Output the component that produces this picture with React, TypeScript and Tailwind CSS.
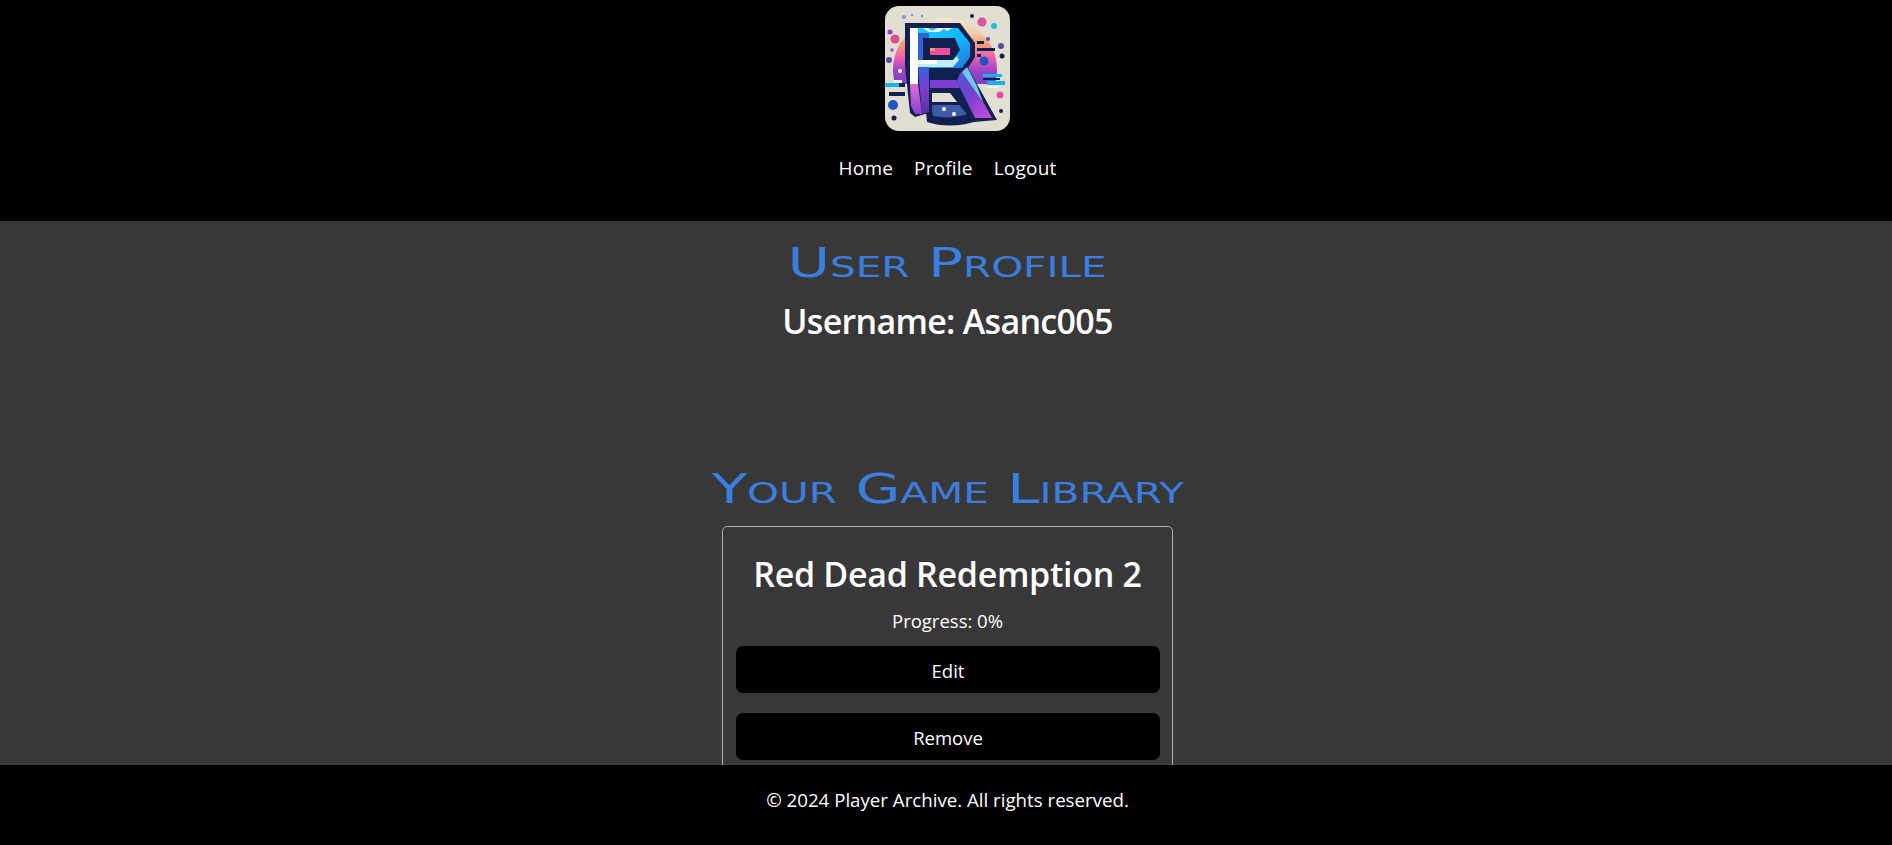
function Logo() {
  return (
    <svg viewBox="0 0 125 125" className="h-[125px] w-[125px] rounded-[14px] bg-[#e2dfd2]">
      <defs>
        <linearGradient id="sun" x1="0" y1="0" x2="0" y2="1">
          <stop offset="0" stopColor="#ece7d6" />
          <stop offset="0.25" stopColor="#f3c9a8" />
          <stop offset="0.38" stopColor="#f8a070" />
          <stop offset="0.6" stopColor="#ee5fb0" />
          <stop offset="0.8" stopColor="#9a45c8" />
          <stop offset="1" stopColor="#7a3fc0" />
        </linearGradient>
        <linearGradient id="face" x1="0" y1="0" x2="1" y2="1">
          <stop offset="0" stopColor="#12d8f8" />
          <stop offset="0.6" stopColor="#12b0f5" />
          <stop offset="1" stopColor="#2b6fe0" />
        </linearGradient>
        <linearGradient id="stem" x1="0" y1="0" x2="0" y2="1">
          <stop offset="0" stopColor="#3a5fd8" />
          <stop offset="0.45" stopColor="#7a3fd0" />
          <stop offset="1" stopColor="#5a30a0" />
        </linearGradient>
        <linearGradient id="stripe" x1="0" y1="0" x2="0" y2="1">
          <stop offset="0" stopColor="#e070d8" />
          <stop offset="1" stopColor="#8a3fd0" />
        </linearGradient>
        <linearGradient id="leg" x1="0" y1="0" x2="1" y2="1">
          <stop offset="0" stopColor="#3a60d0" />
          <stop offset="0.6" stopColor="#7a3fd0" />
          <stop offset="1" stopColor="#c850d8" />
        </linearGradient>
      </defs>
      <path d="M10 78 A52 52 0 1 1 110 78 Z" fill="url(#sun)" />
      <path d="M92 42h18v3H92zM92 35h7v3h-7zM92 48h4v3h-4z" fill="#12204f" />
      <path d="M98 68h19v3H98zM102 75h18v4h-18zM0 77h17v4H0z" fill="#13b5ee" />
      <path d="M98 72h17v2H98zM14 77h6v4h-6zM4 86h16v4H4z" fill="#12204f" />
      <path d="M102 80h12v2h-12zM8 74h9v3H8z" fill="#f2efe4" />
      <path d="M40 96 H92 L96 114 Q66 124 42 116 Z" fill="#12204f" />
      <path d="M46 99 H84 L86 107 Q66 114 48 110 Z" fill="#3d5aa8" />
      <path d="M20 17 H75 L90 37 V51 L83 62 L112 114 L88 116 L65 87 H47 V106 L30 111 L25 107 L20 60 Z" fill="#12204f" />
      <path d="M25 22 H73 L85 37 V51 L77 62 H33 V22 Z" fill="url(#face)" />
      <path d="M25 22 H33 V78 H25 Z" fill="#ffffff" />
      <path d="M25 78 H33 L37 108 H30 L26 100 Z" fill="url(#stripe)" />
      <path d="M33 27 H44 V62 H33 Z" fill="#2f62d8" />
      <path d="M33 62 H44 V106 L37 108 Z" fill="url(#stem)" />
      <path d="M38 22 H43 L47 25 L53 22 H58 L62 25 L67 22 H60 L54 26 H44 Z" fill="#ffffff" />
      <path d="M38 32 H70 L75 44 L68 54 H38 Z" fill="#12204f" />
      <path d="M33 54 H68 L72 50 L74 54 L68 61 H33 Z" fill="#bfeefa" />
      <path d="M33 54 H52 V58 H33 Z" fill="#ffffff" />
      <path d="M45 42 H65 V49 H45 Z" fill="#ee4f9f" />
      <path d="M45 42 H50 V45 H45 Z" fill="#f8a060" />
      <path d="M45 74 H72 L75 82 H45 Z" fill="#7a3fd0" />
      <path d="M45 66 H77 L90 81 L107 112 H90 L75 82 L72 74 H45 Z" fill="url(#leg)" />
      <path d="M45 62 H78 L72 74 H45 Z" fill="#12204f" />
      <path d="M77 66 L82 61 L92 80 L98 96 Z" fill="#6cc8f2" />
      <circle cx="5" cy="26" r="2.5" fill="#8a3fd0" />
      <circle cx="10" cy="33" r="4.5" fill="#d84f8f" />
      <circle cx="7" cy="44" r="1.8" fill="#9a4fd0" />
      <circle cx="4" cy="54" r="3" fill="#5a4aa8" />
      <circle cx="15" cy="65" r="2" fill="#ffffff" />
      <circle cx="8" cy="99" r="5" fill="#1f55c0" />
      <circle cx="9" cy="112" r="2.5" fill="#12204f" />
      <circle cx="97" cy="16" r="4.5" fill="#e0509f" />
      <circle cx="109" cy="20" r="3" fill="#18c0e0" />
      <circle cx="87" cy="10" r="2" fill="#12204f" />
      <circle cx="103" cy="33" r="2" fill="#5a4aa8" />
      <circle cx="116" cy="40" r="3" fill="#5a4aa8" />
      <circle cx="117" cy="50" r="2.5" fill="#12204f" />
      <circle cx="99" cy="55" r="4.5" fill="#1f55c0" />
      <circle cx="115" cy="89" r="3.5" fill="#e0509f" />
      <circle cx="116" cy="105" r="2" fill="#12204f" />
      <circle cx="19" cy="11" r="2" fill="#6a9ad8" />
      <circle cx="27" cy="9" r="1.2" fill="#6a9ad8" />
      <circle cx="37" cy="10" r="1.2" fill="#6a9ad8" />
      <circle cx="59" cy="103" r="2" fill="#ffffff" />
      <circle cx="69" cy="108" r="2" fill="#ffffff" />
    </svg>
  );
}

function GameCard() {
  return (
    <div className="mt-[12px] w-[451px] rounded-[5px] border border-[#b0b0b0] px-[13px] pt-[21px]">
      <h3 className="text-center text-[34px] leading-[52px] font-semibold tracking-[-0.3px]">Red Dead Redemption 2</h3>
      <p className="mt-[9px] text-center text-[18.5px] leading-[24px]">Progress: 0%</p>
      <button className="mt-[13px] block h-[47px] w-[424px] rounded-[7px] bg-black pt-[3px] text-[18.5px]">Edit</button>
      <button className="mt-[20px] block h-[47px] w-[424px] rounded-[7px] bg-black pt-[3px] text-[18.5px]">Remove</button>
      <div className="h-[40px]" />
    </div>
  );
}

export default function App() {
  return (
    <div className="flex h-screen flex-col overflow-hidden bg-[#383838] font-['Open_Sans','Noto_Sans',sans-serif] text-white">
      <header className="flex h-[221px] shrink-0 flex-col items-center bg-black pt-[6px] pl-[3px]">
        <Logo />
        <nav className="mt-[24px] flex gap-[21px] text-[19px] leading-[27px] tracking-[0.2px]">
          <a>Home</a>
          <a>Profile</a>
          <a>Logout</a>
        </nav>
      </header>
      <main className="flex flex-col items-center pl-[3px]">
        <h1 className="mt-[17px] scale-x-[1.45] font-['DejaVu_Sans',sans-serif] text-[40px] leading-[50px] text-[#3c7de0] [font-variant:small-caps]">User Profile</h1>
        <h2 className="mt-[9px] text-[34px] leading-[48px] font-semibold tracking-[-0.7px]">Username: Asanc005</h2>
        <h2 className="mt-[119px] scale-x-[1.45] font-['DejaVu_Sans',sans-serif] text-[40px] leading-[50px] text-[#3c7de0] [font-variant:small-caps]">Your Game Library</h2>
        <GameCard />
      </main>
      <footer className="fixed inset-x-0 bottom-0 flex h-[80px] items-center justify-center bg-black pb-[10px] pl-[3px] text-[18.7px]">
        © 2024 Player Archive. All rights reserved.
      </footer>
    </div>
  );
}
